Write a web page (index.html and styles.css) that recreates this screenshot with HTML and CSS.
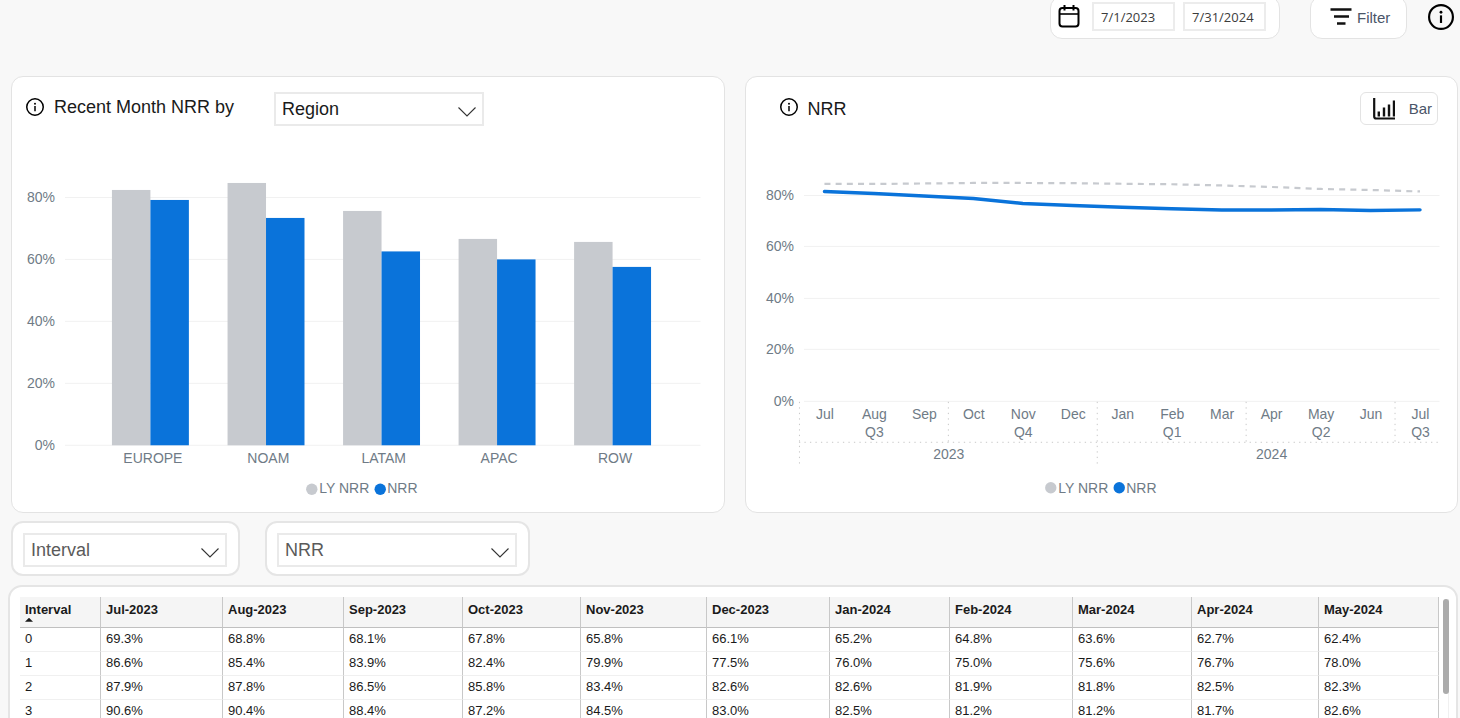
FILE: index.html
```html
<!DOCTYPE html>
<html lang="en">
<head>
<meta charset="utf-8">
<title>NRR dashboard</title>
<link rel="stylesheet" href="styles.css">
</head>
<body>
<svg class="sprite" aria-hidden="true">
  <symbol id="info" viewBox="0 0 24 24">
    <circle cx="12" cy="12" r="11" fill="none" stroke="#000" stroke-width="2"/>
    <circle cx="12" cy="7.600" r="1.300"/>
    <path d="M12 10.500v7" stroke="#000" stroke-width="2"/>
  </symbol>
  <symbol id="chevron" viewBox="0 0 18 10">
    <path d="M.5.5 9 9 17.500.5" fill="none" stroke="#333" stroke-width="1.100"/>
  </symbol>
</svg>
<div class="page">
  <header class="toolbar">
    <div class="dates">
      <svg class="calendar" viewBox="0 0 22 24" aria-hidden="true">
        <rect x="1.500" y="4" width="19" height="18.500" rx="3" fill="none" stroke="#000" stroke-width="2"/>
        <path d="M1.500 10h19" stroke="#000" stroke-width="1.600"/>
        <path d="M6.500 1v5.500M15.500 1v5.500" stroke="#000" stroke-width="2"/>
      </svg>
      <input class="date" type="text" aria-label="Start date" value="7/1/2023">
      <input class="date" type="text" aria-label="End date" value="7/31/2024">
    </div>
    <button class="filter" type="button">
      <svg class="filter-icon" viewBox="0 0 22 17" aria-hidden="true">
        <path d="M.5 1.500h21M4 8.500h15M7 15.500h8.500" stroke="#111" stroke-width="2.400"/>
      </svg>
      Filter
    </button>
    <button class="help" type="button" aria-label="Information"><svg class="help-icon"><use href="#info"/></svg></button>
  </header>

  <main class="content">
    <section class="charts">
      <article class="card">
        <div class="card-head">
          <svg class="info" aria-hidden="true"><use href="#info"/></svg>
          <label class="title" for="dimension">Recent Month NRR by</label>
          <span class="picker picker-region">
            <select id="dimension" class="select select-dark"><option>Region</option></select>
            <svg class="chevron" aria-hidden="true"><use href="#chevron"/></svg>
          </span>
        </div>
        <svg class="chart" viewBox="12 140 712 372" role="img" aria-label="NRR by region">
          <path class="gridline" d="M65 197.500h636M65 259.500h636M65 321.500h636M65 383.500h636M65 445.500h636"/>
          <g class="end">
            <text x="55" y="202">80%</text><text x="55" y="264">60%</text><text x="55" y="326">40%</text><text x="55" y="388">20%</text><text x="55" y="450">0%</text>
          </g>
          <g class="previous">
            <rect x="112" y="190" width="38.500" height="255.500"/>
            <rect x="227.700" y="183" width="38.500" height="262.500"/>
            <rect x="343.300" y="211" width="38.500" height="234.500"/>
            <rect x="458.900" y="239" width="38.500" height="206.500"/>
            <rect x="574.500" y="242" width="38.500" height="203.500"/>
          </g>
          <g class="current">
            <rect x="150.500" y="200" width="38.500" height="245.500"/>
            <rect x="266.200" y="218" width="38.500" height="227.500"/>
            <rect x="381.800" y="251.500" width="38.500" height="194"/>
            <rect x="497.400" y="259.500" width="38.500" height="186"/>
            <rect x="613" y="267" width="38.500" height="178.500"/>
          </g>
          <g class="middle">
            <text x="153" y="463">EUROPE</text><text x="268.500" y="463">NOAM</text><text x="384" y="463">LATAM</text><text x="499.500" y="463">APAC</text><text x="615.500" y="463">ROW</text>
          </g>
          <circle class="previous" cx="312" cy="489.500" r="5.700"/>
          <text x="319.500" y="493">LY NRR</text>
          <circle class="current" cx="380.500" cy="489.500" r="5.700"/>
          <text x="387.500" y="493">NRR</text>
        </svg>
      </article>

      <article class="card">
        <div class="card-head card-head-trend">
          <svg class="info" aria-hidden="true"><use href="#info"/></svg>
          <h2 class="title title-trend">NRR</h2>
          <button class="bar-toggle" type="button">
            <svg class="bar-icon" viewBox="0 0 22 22" aria-hidden="true">
              <path d="M1.200 0v18.500a2 2 0 0 0 2 2H22" fill="none" stroke="#111" stroke-width="2.200"/>
              <path d="M5.800 13.500v5M11 9.500v9M16 6.500v12M21 2.500v16" stroke="#111" stroke-width="2.400"/>
            </svg>
            Bar
          </button>
        </div>
        <svg class="chart" viewBox="746 140 712 372" role="img" aria-label="NRR by month">
          <path class="gridline" d="M804 195.500h636M804 246.500h636M804 298.500h636M804 349.500h636M804 401.500h636"/>
          <g class="end">
            <text x="794" y="200">80%</text><text x="794" y="251">60%</text><text x="794" y="303">40%</text><text x="794" y="354">20%</text><text x="794" y="406">0%</text>
          </g>
          <path class="line-previous" d="M824.500 184H874L924 183.500 973.500 183H1023L1073 183.200 1122.500 183.800 1172 184.300 1222 185.500 1271.500 187 1321 189 1371 190 1420.500 191.500"/>
          <path class="line-current" d="M824.500 191.500 874 193.500 924 196 973.500 198.500 1023 203.500 1073 205.500 1122.500 207.300 1172 208.800 1222 210H1271.500L1321 209.600 1371 210.600 1420.500 209.900"/>
          <path class="divider" d="M799.500 402v64M948.500 402v40M1097.500 402v64M1246.500 402v40M1395.500 402v40M799 442.500h641"/>
          <g class="middle">
            <text x="825" y="419">Jul</text><text x="874.500" y="419">Aug</text><text x="924.500" y="419">Sep</text><text x="974" y="419">Oct</text><text x="1023.500" y="419">Nov</text><text x="1073.500" y="419">Dec</text><text x="1123" y="419">Jan</text><text x="1172.500" y="419">Feb</text><text x="1222.500" y="419">Mar</text><text x="1272" y="419">Apr</text><text x="1321.500" y="419">May</text><text x="1371.500" y="419">Jun</text><text x="1421" y="419">Jul</text>
            <text x="874.500" y="437">Q3</text><text x="1023.500" y="437">Q4</text><text x="1172.500" y="437">Q1</text><text x="1321.500" y="437">Q2</text><text x="1421" y="437">Q3</text>
            <text x="949" y="459">2023</text><text x="1272" y="459">2024</text>
          </g>
          <circle class="previous" cx="1051" cy="488" r="5.700"/>
          <text x="1058.500" y="493">LY NRR</text>
          <circle class="current" cx="1119.500" cy="488" r="5.700"/>
          <text x="1126.500" y="493">NRR</text>
        </svg>
      </article>
    </section>

    <section class="slicers">
      <div class="slicer">
        <span class="picker picker-interval">
          <select class="select" aria-label="Row field"><option>Interval</option></select>
          <svg class="chevron" aria-hidden="true"><use href="#chevron"/></svg>
        </span>
      </div>
      <div class="slicer">
        <span class="picker picker-metric">
          <select class="select" aria-label="Metric"><option>NRR</option></select>
          <svg class="chevron" aria-hidden="true"><use href="#chevron"/></svg>
        </span>
      </div>
    </section>

    <section class="table-panel">
      <table class="matrix">
        <colgroup><col class="w81"><col class="w122"><col class="w121"><col class="w119"><col class="w118"><col class="w126"><col class="w123"><col class="w120"><col class="w123"><col class="w119"><col class="w127"><col class="w120"></colgroup>
        <thead>
          <tr><th aria-sort="ascending">Interval<span class="sort"></span></th><th>Jul-2023</th><th>Aug-2023</th><th>Sep-2023</th><th>Oct-2023</th><th>Nov-2023</th><th>Dec-2023</th><th>Jan-2024</th><th>Feb-2024</th><th>Mar-2024</th><th>Apr-2024</th><th>May-2024</th></tr>
        </thead>
        <tbody>
          <tr><td>0</td><td>69.3%</td><td>68.8%</td><td>68.1%</td><td>67.8%</td><td>65.8%</td><td>66.1%</td><td>65.2%</td><td>64.8%</td><td>63.6%</td><td>62.7%</td><td>62.4%</td></tr>
          <tr><td>1</td><td>86.6%</td><td>85.4%</td><td>83.9%</td><td>82.4%</td><td>79.9%</td><td>77.5%</td><td>76.0%</td><td>75.0%</td><td>75.6%</td><td>76.7%</td><td>78.0%</td></tr>
          <tr><td>2</td><td>87.9%</td><td>87.8%</td><td>86.5%</td><td>85.8%</td><td>83.4%</td><td>82.6%</td><td>82.6%</td><td>81.9%</td><td>81.8%</td><td>82.5%</td><td>82.3%</td></tr>
          <tr><td>3</td><td>90.6%</td><td>90.4%</td><td>88.4%</td><td>87.2%</td><td>84.5%</td><td>83.0%</td><td>82.5%</td><td>81.2%</td><td>81.2%</td><td>81.7%</td><td>82.6%</td></tr>
        </tbody>
      </table>
      <div class="scroll-track"><div class="scroll-thumb"></div></div>
    </section>
  </main>
</div>
</body>
</html>
```
FILE: styles.css
```css
* { box-sizing: border-box; }

body {
  margin: 0;
  background: #f8f8f8;
  font-family: "Liberation Sans", Arial, sans-serif;
  color: #1a1a1a;
}

.sprite { position: absolute; width: 0; height: 0; }

.page {
  height: 100vh;
  overflow: hidden;
  display: flex;
  flex-direction: column;
}

/* Toolbar: its boxes run off the top edge of the page */
.toolbar {
  display: flex;
  justify-content: flex-end;
  align-items: center;
  height: 43px;
  margin-top: -4px;
  padding-right: 6px;
}

.dates, .filter {
  display: flex;
  align-items: center;
  height: 43px;
  background: #fff;
  border: 1px solid #e3e3e3;
  border-radius: 12px;
}

.dates { gap: 8px; padding: 0 13px 2px 7px; margin-right: 30px; }
.calendar { width: 22px; height: 24px; margin: 0 4px 2px 0; }

.date {
  width: 83px;
  height: 29px;
  padding: 0 7px;
  border: 2px solid #ececec;
  background: #fff;
  font: 13px "Open Sans", "Noto Sans", sans-serif;
  color: #3c3c3c;
}

.filter {
  width: 97px;
  gap: 5px;
  padding: 0 0 0 19px;
  margin-right: 21px;
  font: 15px "Liberation Sans", Arial, sans-serif;
  color: #4a5568;
}

.filter-icon { width: 22px; height: 17px; margin-bottom: 2px; }

.help { display: flex; padding: 0 0 2px; border: 0; background: none; }
.help-icon { width: 26px; height: 26px; }

.content {
  flex: 1;
  display: flex;
  flex-direction: column;
  min-height: 0;
  padding: 37px 2px 0 11px;
}

.charts {
  flex: none;
  display: grid;
  grid-template-columns: 1fr 1fr;
  gap: 20px;
}

.card {
  background: #fff;
  border: 1px solid #e3e3e3;
  border-radius: 12px;
}

.card-head {
  display: flex;
  align-items: flex-start;
  gap: 10px;
  padding: 15px 19px 14px 14px;
}

.card-head-trend { padding-left: 34px; }

.info { width: 18px; height: 18px; margin-top: 6px; }

.title { margin: 0; font-size: 18px; font-weight: 400; line-height: 30px; }
.title-trend { line-height: 34px; }

.picker { position: relative; display: block; }
.picker-region { width: 210px; margin-left: 30px; }
.picker-interval { width: 204px; }
.picker-metric { width: 240px; }

.select {
  display: block;
  width: 100%;
  height: 34px;
  padding: 0 30px 0 6px;
  appearance: none;
  border: 2px solid #eaeaea;
  border-radius: 0;
  background: #fff;
  font: 18px "Liberation Sans", Arial, sans-serif;
  color: #5a5a5a;
}

.select-dark { color: #1a1a1a; }

.chevron {
  position: absolute;
  right: 8px;
  bottom: 9px;
  width: 18px;
  height: 10px;
  pointer-events: none;
}

.bar-toggle {
  display: flex;
  align-items: center;
  justify-content: space-between;
  width: 78px;
  height: 33px;
  margin: 0 0 1px auto;
  padding: 0 5px 0 12px;
  background: #fff;
  border: 1px solid #e3e3e3;
  border-radius: 6px;
  font: 15px "Liberation Sans", Arial, sans-serif;
  color: #4a5568;
}

.bar-icon { width: 22px; height: 22px; }

.chart { display: block; width: 100%; height: auto; font-size: 14px; fill: #6f7b86; }
.end { text-anchor: end; }
.middle { text-anchor: middle; }
.gridline { fill: none; stroke: #f1f1f1; }
.previous { fill: #c7cacf; }
.current { fill: #0a73da; }
.line-previous { fill: none; stroke: #c7cacf; stroke-width: 2.200; stroke-dasharray: 6 5.200; }
.line-current { fill: none; stroke: #0a73da; stroke-width: 3.400; stroke-linecap: round; stroke-linejoin: round; }
.divider { fill: none; stroke: #c8c8c8; stroke-dasharray: 1.300 4.200; }

.slicers { flex: none; display: flex; gap: 25px; margin-top: 8px; }

.slicer {
  padding: 10px 11px 7px 10px;
  background: #fff;
  border: 2px solid #e5e5e5;
  border-radius: 12px;
}

/* Table panel continues past the bottom of the window */
.table-panel {
  flex: 1;
  display: flex;
  align-items: flex-start;
  gap: 4px;
  min-height: 0;
  margin: 9px 0 -20px -3px;
  padding: 10px 9px 0 10px;
  background: #fff;
  border: 2px solid #e5e5e5;
  border-radius: 14px;
}

.matrix {
  flex: 1;
  width: 100%;
  table-layout: fixed;
  border-collapse: separate;
  border-spacing: 0;
  font-size: 13px;
}

.w81 { width: 81px; }
.w118 { width: 118px; }
.w119 { width: 119px; }
.w120 { width: 120px; }
.w121 { width: 121px; }
.w122 { width: 122px; }
.w123 { width: 123px; }
.w126 { width: 126px; }
.w127 { width: 127px; }

.matrix th, .matrix td {
  padding: 0 5px;
  border-right: 1px solid #c8c8c8;
  text-align: left;
}

.matrix th {
  height: 31px;
  padding-top: 5px;
  vertical-align: top;
  line-height: 16px;
  background: #f5f5f5;
  border-bottom: 1px solid #c0c0c0;
}

.matrix td { height: 24px; line-height: 16px; border-bottom: 1px solid #f0f0f0; }

.sort {
  display: block;
  width: 8px;
  height: 4px;
  background: #1a1a1a;
  clip-path: polygon(50% 0, 100% 100%, 0 100%);
}

.scroll-track { align-self: stretch; width: 6px; margin-top: 2px; border-right: 1px solid #f0f0f0; }
.scroll-thumb { width: 6px; height: 95px; border-radius: 3px; background: #ababab; }
```
